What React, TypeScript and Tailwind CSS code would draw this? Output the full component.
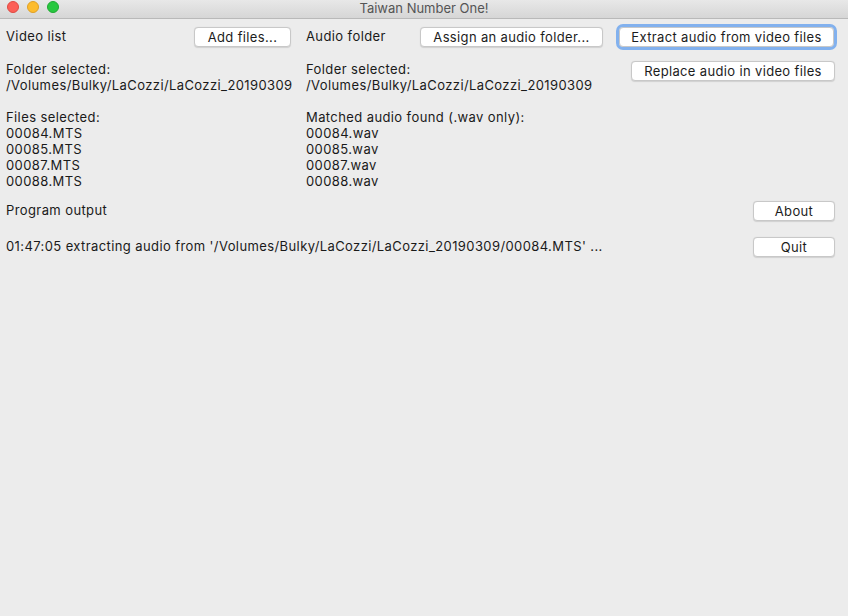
import React from 'react';

const videoFiles = ['00084.MTS', '00085.MTS', '00087.MTS', '00088.MTS'];
const audioFiles = ['00084.wav', '00085.wav', '00087.wav', '00088.wav'];
const folder = '/Volumes/Bulky/LaCozzi/LaCozzi_20190309';

const MacButton: React.FC<{ label: string; className?: string; focused?: boolean }> = ({ label, className = '', focused }) => (
  <button
    className={`h-[20px] rounded-[4px] bg-white border border-[#c8c8c8] shadow-[0_0.5px_1px_rgba(0,0,0,0.12)] text-[13px] leading-none tracking-[0.35px] text-[#1c1c1c] flex items-center justify-center ${
      focused ? 'outline-[3px] outline-[#82b1ee] outline -outline-offset-0' : ''
    } ${className}`}
  >
    {label}
  </button>
);

const App: React.FC = () => {
  return (
    <div className="w-[848px] h-[616px] bg-[#ececec] flex flex-col text-[13px] tracking-[0.4px] text-[#1a1a1a] font-['Inter','Liberation_Sans',sans-serif] overflow-hidden">
      {/* Title bar */}
      <div className="h-[19px] shrink-0 flex items-center relative bg-gradient-to-b from-[#e8e8e8] to-[#d6d6d6] border-b border-[#b9b9b9]">
        <div className="absolute left-[7px] top-[1px] flex gap-[8px]">
          <span className="w-[12px] h-[12px] rounded-full bg-[#fc5f57] border border-[#de4a42]" />
          <span className="w-[12px] h-[12px] rounded-full bg-[#fdbc2e] border border-[#dfa025]" />
          <span className="w-[12px] h-[12px] rounded-full bg-[#28c840] border border-[#1fa932]" />
        </div>
        <div className="flex-1 text-center text-[13px] tracking-normal text-[#555555] leading-none -mt-[1px]">Taiwan Number One!</div>
      </div>

      {/* Top row */}
      <div className="flex items-center pl-[6px] mt-[8px] h-[20px]">
        <div className="w-[285px] flex items-center justify-between">
          <span>Video list</span>
          <MacButton label="Add files..." className="w-[97px]" />
        </div>
        <div className="w-[297px] ml-[15px] flex items-center justify-between">
          <span>Audio folder</span>
          <MacButton label="Assign an audio folder..." className="w-[183px]" />
        </div>
        <div className="ml-[16px]">
          <MacButton label="Extract audio from video files" focused className="w-[215px]" />
        </div>
      </div>

      {/* Folder row */}
      <div className="flex pl-[6px] mt-[14px]">
        <div className="w-[300px] leading-[16px]">
          <div>Folder selected:</div>
          <div>{folder}</div>
        </div>
        <div className="w-[300px] leading-[16px]">
          <div>Folder selected:</div>
          <div>{folder}</div>
        </div>
        <div className="w-[229px] flex justify-end">
          <MacButton label="Replace audio in video files" className="w-[204px]" />
        </div>
      </div>

      {/* Files row */}
      <div className="flex pl-[6px] mt-[16px] leading-[16px]">
        <div className="w-[300px]">
          <div>Files selected:</div>
          {videoFiles.map((f) => (
            <div key={f}>{f}</div>
          ))}
        </div>
        <div className="w-[300px]">
          <div>Matched audio found (.wav only):</div>
          {audioFiles.map((f) => (
            <div key={f}>{f}</div>
          ))}
        </div>
      </div>

      {/* Program output */}
      <div className="flex items-center justify-between pl-[6px] pr-[13px] mt-[12px] h-[20px]">
        <span>Program output</span>
        <MacButton label="About" className="w-[82px]" />
      </div>
      <div className="flex items-center justify-between pl-[6px] pr-[13px] mt-[16px] h-[20px]">
        <span>01:47:05 extracting audio from '/Volumes/Bulky/LaCozzi/LaCozzi_20190309/00084.MTS' ...</span>
        <MacButton label="Quit" className="w-[82px]" />
      </div>
    </div>
  );
};

export default App;
